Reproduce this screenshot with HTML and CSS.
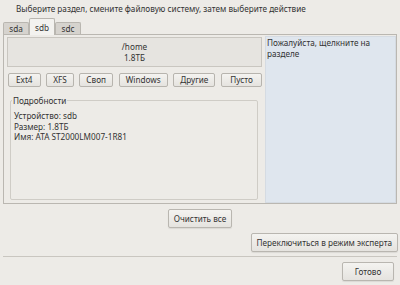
FILE: index.html
```html
<!DOCTYPE html>
<html lang="ru">
  <head>
    <meta charset="UTF-8" />
    <title>Разделы</title>
    <link rel="stylesheet" href="styles.css">
  </head>
  <body>
    <p class="hint">Выберите раздел, смените файловую систему, затем выберите действие</p>

    <nav class="tabs">
      <button class="tab">sda</button>
      <button class="tab active">sdb</button>
      <button class="tab">sdc</button>
    </nav>

    <section class="panel">
      <div class="left">
        <div class="part">
          <span>/home</span>
          <span>1.8ТБ</span>
        </div>
        <div class="fs">
          <button class="btn">Ext4</button>
          <button class="btn">XFS</button>
          <button class="btn">Своп</button>
          <button class="btn">Windows</button>
          <button class="btn">Другие</button>
          <button class="btn">Пусто</button>
        </div>
        <fieldset class="details">
          <legend>Подробности</legend>
          <p>Устройство: sdb</p>
          <p>Размер: 1.8ТБ</p>
          <p>Имя: ATA ST2000LM007-1R81</p>
        </fieldset>
      </div>
      <div class="info">Пожалуйста, щелкните на разделе</div>
    </section>

    <div class="row center">
      <button class="btn big">Очистить все</button>
    </div>
    <div class="row right expert">
      <button class="btn big">Переключиться в режим эксперта</button>
    </div>
    <hr class="sep">
    <div class="row right">
      <button class="btn big done">Готово</button>
    </div>
  </body>
</html>
```

FILE: styles.css
```css
* {
  box-sizing: border-box;
}
body {
  margin: 0;
  width: 400px;
  height: 285px;
  background-color: #edebe7;
  color: #333;
  font-family: "Noto Sans", "Open Sans", sans-serif;
  font-size: 8.2px;
  overflow: hidden;
}
button {
  font-family: inherit;
  font-size: 8.2px;
  color: #333;
}
.hint {
  margin: 0;
  padding-left: 16px;
  height: 18px;
  line-height: 17px;
}

/* tabs */
.tabs {
  display: flex;
  margin-left: 3px;
  height: 16px;
  align-items: flex-end;
}
.tab {
  width: 26px;
  height: 12px;
  padding: 0;
  border: 1px solid #b9b6b0;
  border-bottom: none;
  background-color: #d6d3ce;
  border-radius: 2px 2px 0 0;
  line-height: 11px;
}
.tab.active {
  height: 17px;
  line-height: 13px;
  background-color: #f3f2ef;
  position: relative;
  top: 1px;
  z-index: 1;
}

/* main panel */
.panel {
  display: flex;
  gap: 3px;
  margin-left: 3px;
  width: 394px;
  height: 170px;
  padding: 1px 0 0 3px;
  border: 1px solid #bab7b1;
}
.left {
  width: 255px;
  display: flex;
  flex-direction: column;
}
.part {
  margin-top: 1px;
  height: 30px;
  border: 1px solid #c9c6c0;
  background-color: #e6e4e0;
  display: flex;
  flex-direction: column;
  align-items: center;
  justify-content: center;
  line-height: 11px;
}
.fs {
  display: flex;
  justify-content: space-between;
  margin-top: 6px;
  padding-left: 1px;
}
.btn {
  height: 14px;
  padding: 0 6px;
  border: 1px solid #b7b4ae;
  border-radius: 2px;
  background: linear-gradient(#f4f3f0, #e5e3df);
  line-height: 12px;
}
.fs .btn:first-child {
  padding: 0 7px;
}
.fs .btn:last-child {
  width: 41px;
}
.details {
  margin: 8px 4px 0 3px;
  padding: 5px 3px 0;
  height: 105px;
  border: 1px solid #cfccc6;
  border-radius: 2px;
  line-height: 10.6px;
}
.details legend {
  padding: 0 1px;
  margin-left: -2px;
  line-height: 11px;
}
.details p {
  margin: 0;
}
.info {
  flex: 1;
  margin-top: 0;
  background-color: #dfe6ee;
  border: 1px solid #d5dbe2;
  padding: 0 1px;
  line-height: 11px;
}

/* bottom */
.row {
  display: flex;
  padding: 0 3px;
}
.center {
  justify-content: center;
  margin-top: 5px;
}
.right {
  justify-content: flex-end;
}
.expert {
  margin-top: 5px;
  padding-right: 2px;
}
.big {
  height: 19px;
  padding: 0 5px;
  line-height: 17px;
  border-color: #b9b6b0;
  box-shadow: 0 1px 1px rgba(0, 0, 0, 0.08);
}
.sep {
  margin: 4px 3px 5px;
  border: none;
  border-top: 1px solid #c9c6c0;
}
.done {
  width: 52px;
  margin-right: 3px;
}
```
